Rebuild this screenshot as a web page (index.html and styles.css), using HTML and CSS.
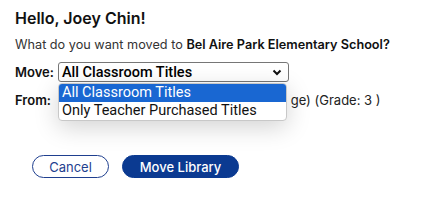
FILE: index.html
```html
<!DOCTYPE html>
<html lang="en">
<head>
    <meta charset="UTF-8">
    <meta name="viewport" content="width=device-width, initial-scale=1.0">
    <title>Move Library</title>
    <link rel="stylesheet" href="styles.css">
</head>
<body>
    <div class="move-modal">
        <h2 class="greeting">Hello, Joey Chin!</h2>
        <p class="question">What do you want moved to <b>Bel Aire Park Elementary School?</b></p>

        <div class="field-row move-row">
            <span class="field-label">Move:</span>
            <div class="select-wrap">
                <div class="fake-select">
                    <span>All Classroom Titles</span>
                    <svg class="chevron" width="10" height="7" viewBox="0 0 10 7">
                        <path d="M1.5 1.5 L5 5 L8.5 1.5" fill="none" stroke="#111" stroke-width="2"/>
                    </svg>
                </div>
                <ul class="select-menu">
                    <li class="option selected">All Classroom Titles</li>
                    <li class="option">Only Teacher Purchased Titles</li>
                </ul>
            </div>
        </div>

        <div class="field-row from-row">
            <span class="field-label">From:</span>
            <span class="from-text">Mrs. Chin's Class (Bel Aire Park Colle ge) (Grade: 3 )</span>
        </div>

        <div class="actions">
            <button class="btn btn-cancel">Cancel</button>
            <button class="btn btn-move">Move Library</button>
        </div>
    </div>
</body>
</html>
```

FILE: styles.css
```css
body {
    margin: 0;
    padding: 0;
    background-color: #fff;
    font-family: Inter, "Noto Sans", sans-serif;
    color: #222;
}
.move-modal {
    padding: 8px 15px 0 15px;
}
.greeting {
    margin: 0;
    font-size: 16px;
    font-weight: 600;
    color: #111;
    line-height: 20px;
}
.question {
    margin: 9px 0 0 0;
    font-size: 12.7px;
    line-height: 16px;
    color: #333;
}
.question b {
    font-weight: 600;
    color: #111;
}
.field-row {
    display: flex;
    align-items: center;
    font-size: 13px;
}
.field-label {
    font-weight: 600;
    color: #111;
    width: 43px;
}
.move-row {
    margin-top: 9px;
}
.select-wrap {
    position: relative;
}
.fake-select {
    height: 18px;
    width: 220px;
    border: 1px solid #767676;
    border-radius: 3px;
    display: flex;
    align-items: center;
    justify-content: space-between;
    padding: 0 6px 0 3px;
    font-family: Roboto, "Liberation Sans", sans-serif;
    font-size: 14.5px;
    font-weight: 500;
    color: #000;
}
.chevron { margin-top: 1px; }
.select-menu {
    position: absolute;
    top: 21px;
    left: 0;
    width: 227px;
    margin: 0;
    padding: 0;
    list-style: none;
    background: #fff;
    border: 1px solid #c8c8c8;
    border-radius: 4px;
    box-shadow: 0 6px 24px rgba(0, 0, 0, 0.18);
    font-family: Roboto, "Liberation Sans", sans-serif;
    font-size: 14.5px;
    color: #111;
    overflow: hidden;
}
.option {
    height: 18px;
    line-height: 18px;
    padding: 0 3px;
}
.option.selected {
    background-color: #1967d2;
    color: #fff;
}
.from-row {
    margin-top: 10px;
}
.from-text {
    color: #222;
    white-space: nowrap;
}
.actions {
    display: flex;
    gap: 13px;
    margin: 47px 0 0 17px;
}
.btn {
    height: 23px;
    border-radius: 12px;
    font-family: Inter, "Noto Sans", sans-serif;
    font-size: 13px;
    cursor: pointer;
}
.btn-cancel {
    width: 77px;
    background: #fff;
    border: 1px solid #1f3f8f;
    color: #1f3f8f;
}
.btn-move {
    width: 117px;
    background: #0b3a91;
    border: 1px solid #0b3a91;
    color: #fff;
    font-weight: 500;
}
```
